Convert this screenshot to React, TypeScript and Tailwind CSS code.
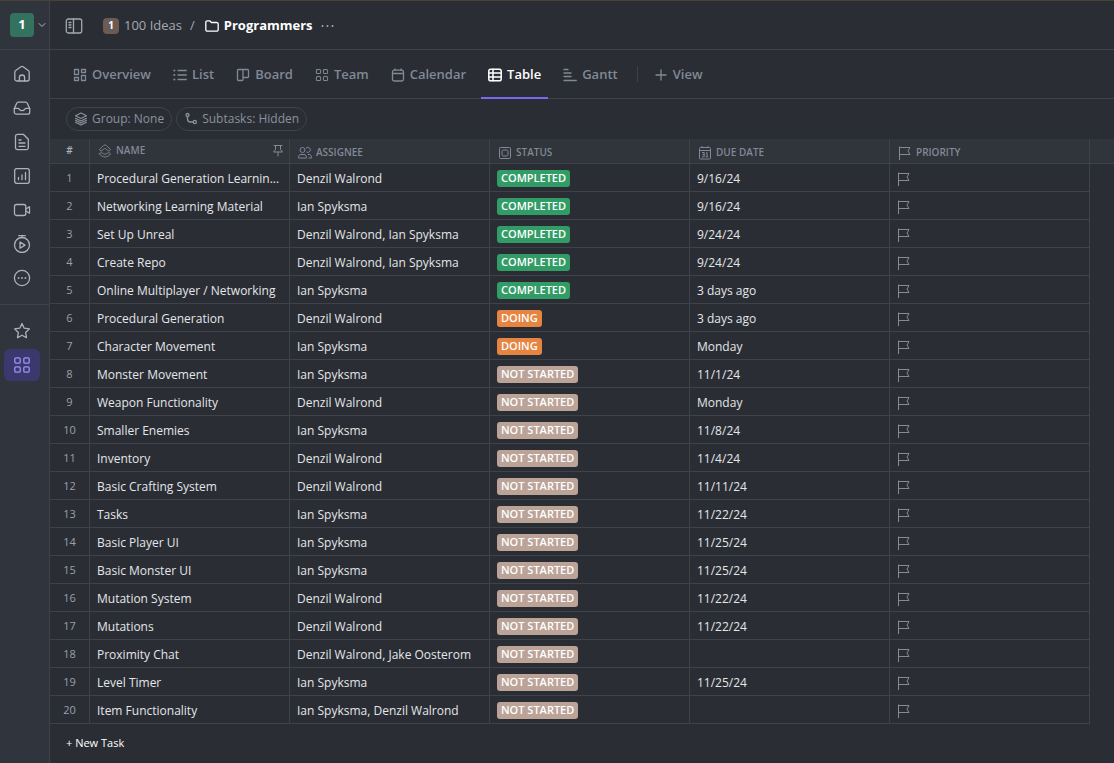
import type { ReactNode } from "react";

type IconProps = { className?: string; children?: ReactNode; box?: number };

function Icon({ className = "size-[18px]", children, box = 18 }: IconProps) {
  return (
    <svg
      aria-hidden="true"
      viewBox={`0 0 ${box} ${box}`}
      className={`shrink-0 ${className}`}
      fill="none"
      stroke="currentColor"
      strokeWidth="1.3"
      strokeLinecap="round"
      strokeLinejoin="round"
    >
      {children}
    </svg>
  );
}

const navItems: { label: string; icon: ReactNode }[] = [
  {
    label: "Home",
    icon: (
      <Icon>
        <path d="M1.8 7.2a2 2 0 0 1 .9-1.7l5.2-3.7a2 2 0 0 1 2.2 0l5.2 3.7a2 2 0 0 1 .9 1.7V14a2 2 0 0 1-2 2H3.8a2 2 0 0 1-2-2z" />
        <path d="M6.4 16v-3.4a2.6 2.6 0 0 1 5.2 0V16" />
      </Icon>
    ),
  },
  {
    label: "Inbox",
    icon: (
      <Icon>
        <path d="M1.3 9.5 3.6 4.4A2 2 0 0 1 5.4 3.2h7.2a2 2 0 0 1 1.8 1.2l2.3 5.1v3.7a2 2 0 0 1-2 2H3.3a2 2 0 0 1-2-2z" />
        <path d="M1.3 9.3h3.5c.9 0 1.2.5 1.6 1.1.5.8 1.3 1.2 2.6 1.2s2.1-.4 2.6-1.2c.4-.6.7-1.1 1.6-1.1h3.5" />
      </Icon>
    ),
  },
  {
    label: "Docs",
    icon: (
      <Icon>
        <path d="M4.5 1.3h5.8l5 5v8.4a2 2 0 0 1-2 2H4.5a2 2 0 0 1-2-2V3.3a2 2 0 0 1 2-2z" />
        <path d="M6 7h2M6 10h6M6 13.3h6" />
      </Icon>
    ),
  },
  {
    label: "Dashboards",
    icon: (
      <Icon>
        <rect x="1.7" y="1.7" width="14.6" height="14.6" rx="2" />
        <path d="M5.5 12.7v-2.2M9 12.7V8M12.5 12.7V5.5" />
      </Icon>
    ),
  },
  {
    label: "Clips",
    icon: (
      <Icon>
        <rect x="1.5" y="3.5" width="11.3" height="11" rx="2" />
        <path d="m12.8 8 3.7-2.2v6.4L12.8 10" />
      </Icon>
    ),
  },
  {
    label: "Timesheets",
    icon: (
      <Icon>
        <circle cx="9" cy="10" r="7.5" />
        <path d="M5.8.7h6.4M9 .7v1.8M7 7v6.2l5-3.1z" />
      </Icon>
    ),
  },
  {
    label: "More",
    icon: (
      <Icon>
        <circle cx="9" cy="9" r="7.6" />
        <path d="M5.6 9h.01M9 9h.01M12.4 9h.01" strokeWidth="1.8" />
      </Icon>
    ),
  },
];

const FourSquares = ({ className = "size-[18px]" }: { className?: string }) => (
  <Icon className={className}>
    <rect x="1.8" y="1.8" width="5.4" height="5.4" rx="1.3" />
    <rect x="10.8" y="1.8" width="5.4" height="5.4" rx="1.3" />
    <rect x="1.8" y="10.8" width="5.4" height="5.4" rx="1.3" />
    <rect x="10.8" y="10.8" width="5.4" height="5.4" rx="1.3" />
  </Icon>
);

const tabs: { label: string; icon: ReactNode }[] = [
  {
    label: "Overview",
    icon: (
      <Icon className="size-3.5" box={14}>
        <path d="M1.5 1.5h4v5h-4zM8.5 1.5h4v3h-4zM1.5 9.5h4v3h-4zM8.5 7.5h4v5h-4z" />
      </Icon>
    ),
  },
  {
    label: "List",
    icon: (
      <Icon className="size-3.5" box={14}>
        <path d="M5 2.5h8.3M5 7h8.3M5 11.5h8.3" />
        <path d="M1.2 2.5h.3M1.2 7h.3M1.2 11.5h.3" strokeWidth="1.8" />
      </Icon>
    ),
  },
  {
    label: "Board",
    icon: (
      <Icon className="size-3.5" box={14}>
        <path d="M2.5 1.5h9a1 1 0 0 1 1 1v6a1 1 0 0 1-1 1H7v2a1 1 0 0 1-1 1H2.5a1 1 0 0 1-1-1v-9a1 1 0 0 1 1-1zM7 1.5v8" />
      </Icon>
    ),
  },
  { label: "Team", icon: <FourSquares className="size-3.5" /> },
  {
    label: "Calendar",
    icon: (
      <Icon className="size-3.5" box={14}>
        <rect x="1.5" y="2.2" width="11" height="10.8" rx="1.8" />
        <path d="M1.5 5.5h11M4 .8v1.4M10 .8v1.4" />
      </Icon>
    ),
  },
  {
    label: "Table",
    icon: (
      <Icon className="size-3.5" box={14}>
        <rect x=".8" y="1.3" width="12.4" height="11.4" rx="1.8" strokeWidth="1.5" />
        <path d="M.8 5.1h12.4M.8 8.9h12.4M5 1.3v11.4" strokeWidth="1.5" />
      </Icon>
    ),
  },
  {
    label: "Gantt",
    icon: (
      <Icon className="size-3.5" box={14}>
        <path d="M1 1.5h4M1 5h7M1 8.5h7M1 12.5h12.3" />
      </Icon>
    ),
  },
];

const Flag = ({ className = "size-3.5" }: { className?: string }) => (
  <svg aria-hidden="true" viewBox="0 0 14 14" className={`shrink-0 ${className}`} fill="none" stroke="currentColor">
    <path d="M1.5.5V14M1.5 1.5h10.500L10 5l2 3.500H1.500" />
  </svg>
);

type Column = { label: string; icon: ReactNode };

const columns: Column[] = [
  {
    label: "Assignee",
    icon: (
      <svg aria-hidden="true" viewBox="0 0 14 14" className="size-3.5 shrink-0" fill="none" stroke="currentColor">
        <circle cx="4.500" cy="4" r="2.5" />
        <path d="M.5 11.500c0-2 1-3 2.500-3h3c1.500 0 2.500 1 2.500 3v.5h-8z" />
        <path d="M8 2.200A2.500 2.500 0 1 1 8.500 6M10 8.500h1c1.500 0 2.500 1 2.500 3v.5h-3" />
      </svg>
    ),
  },
  {
    label: "Status",
    icon: (
      <svg aria-hidden="true" viewBox="0 0 14 14" className="size-3.5 shrink-0" fill="none" stroke="currentColor">
        <rect x="1.5" y="1.5" width="11" height="11" rx="1" />
        <rect x="4" y="4" width="6" height="6" rx="1.5" />
      </svg>
    ),
  },
  {
    label: "Due date",
    icon: (
      <svg aria-hidden="true" viewBox="0 0 14 14" className="size-3.5 shrink-0" fill="none" stroke="currentColor">
        <rect x="1.5" y="1.5" width="11" height="11.5" rx="1" />
        <path d="M1.5 4.500h11M4 0v1.500M10 0v1.500" />
        <path d="M4 6.500h2.200v4.300H4M4.500 8.600h1.700M9 10.800V6.500L8 7M7.800 10.800h2.400" />
      </svg>
    ),
  },
  { label: "Priority", icon: <Flag /> },
];

type Status = "COMPLETED" | "DOING" | "NOT STARTED";
type Task = { name: string; assignee: string; status: Status; due: string };

const statusColor: Record<Status, string> = {
  COMPLETED: "bg-[#329c66]",
  DOING: "bg-[#e68542]",
  "NOT STARTED": "bg-[#bba398]",
};

const D = "Denzil Walrond";
const I = "Ian Spyksma";

const tasks: Task[] = [
  { name: "Procedural Generation Learnin...", assignee: D, status: "COMPLETED", due: "9/16/24" },
  { name: "Networking Learning Material", assignee: I, status: "COMPLETED", due: "9/16/24" },
  { name: "Set Up Unreal", assignee: `${D}, ${I}`, status: "COMPLETED", due: "9/24/24" },
  { name: "Create Repo", assignee: `${D}, ${I}`, status: "COMPLETED", due: "9/24/24" },
  { name: "Online Multiplayer / Networking", assignee: I, status: "COMPLETED", due: "3 days ago" },
  { name: "Procedural Generation", assignee: D, status: "DOING", due: "3 days ago" },
  { name: "Character Movement", assignee: I, status: "DOING", due: "Monday" },
  { name: "Monster Movement", assignee: I, status: "NOT STARTED", due: "11/1/24" },
  { name: "Weapon Functionality", assignee: D, status: "NOT STARTED", due: "Monday" },
  { name: "Smaller Enemies", assignee: I, status: "NOT STARTED", due: "11/8/24" },
  { name: "Inventory", assignee: D, status: "NOT STARTED", due: "11/4/24" },
  { name: "Basic Crafting System", assignee: D, status: "NOT STARTED", due: "11/11/24" },
  { name: "Tasks", assignee: I, status: "NOT STARTED", due: "11/22/24" },
  { name: "Basic Player UI", assignee: I, status: "NOT STARTED", due: "11/25/24" },
  { name: "Basic Monster UI", assignee: I, status: "NOT STARTED", due: "11/25/24" },
  { name: "Mutation System", assignee: D, status: "NOT STARTED", due: "11/22/24" },
  { name: "Mutations", assignee: D, status: "NOT STARTED", due: "11/22/24" },
  { name: "Proximity Chat", assignee: `${D}, Jake Oosterom`, status: "NOT STARTED", due: "" },
  { name: "Level Timer", assignee: I, status: "NOT STARTED", due: "11/25/24" },
  { name: "Item Functionality", assignee: `${I}, ${D}`, status: "NOT STARTED", due: "" },
];

function Sidebar() {
  return (
    <aside className="flex w-[50px] shrink-0 flex-col border-r border-[#3e424a] bg-[#30343c] text-[#adb3bd]">
      <button aria-label="Switch workspace" className="flex h-[49px] items-center gap-1 border-b border-[#3e424a] pl-2.5">
        <span className="flex size-6 items-center justify-center rounded bg-[#33725f] text-[13px] font-bold text-white">1</span>
        <Icon className="size-2" box={8}>
          <path d="m1 2.500 3 3 3-3" strokeWidth="1" />
        </Icon>
      </button>
      <nav className="flex flex-col border-b border-[#3e424a] pt-[7px] pb-[9px] pl-1">
        {navItems.map((item) => (
          <a key={item.label} href="#" aria-label={item.label} className="flex h-[34px] w-9 items-center justify-center">
            {item.icon}
          </a>
        ))}
      </nav>
      <div className="flex flex-col gap-0.5 pt-2.5 pl-1">
        <a href="#" aria-label="Favorites" className="flex h-8 w-9 items-center justify-center">
          <Icon>
            <path d="m9 1.500 2.200 4.700 5.200.7-3.800 3.600.9 5.200L9 13.200l-4.500 2.500.9-5.200L1.600 6.900l5.200-.7z" />
          </Icon>
        </a>
        <a href="#" aria-label="Spaces" aria-current="page" className="flex h-8 w-9 items-center justify-center rounded-md bg-[#3c386e] text-[#9d92fb]">
          <FourSquares />
        </a>
      </div>
    </aside>
  );
}

function Header() {
  return (
    <header className="flex h-[49px] items-center border-b border-[#3e424a] pt-px pl-[15px] text-[13px] text-[#a3a9b3]">
      <button aria-label="Toggle sidebar" className="mr-5">
        <Icon>
          <rect x="1.3" y="2" width="15.4" height="14" rx="2" />
          <path d="M8.500 2v14M4 5.500h2M4 8h2M4 10.500h2" />
        </Icon>
      </button>
      <a href="#" className="flex items-center gap-[5px]">
        <span className="flex size-4 items-center justify-center rounded-sm bg-[#6b5b54] text-[10px] font-bold text-white">1</span>
        100 Ideas
      </a>
      <span className="mr-2.5 ml-2">/</span>
      <a href="#" className="flex items-center gap-[5px] font-bold text-white">
        <Icon className="size-3.5" box={14}>
          <path d="M.8 3.300a1.500 1.500 0 0 1 1.500-1.500h2.400l1.700 1.700h5.300a1.500 1.500 0 0 1 1.500 1.500v5.700a1.500 1.500 0 0 1-1.500 1.500H2.300a1.500 1.500 0 0 1-1.500-1.500z" />
        </Icon>
        Programmers
      </a>
      <button aria-label="More options" className="ml-2">
        <Icon className="size-3.5" box={14}>
          <path d="M1.500 7h.010M6.500 7h.010M11.500 7h.010" strokeWidth="2" />
        </Icon>
      </button>
    </header>
  );
}

function ViewTabs() {
  return (
    <div className="flex h-[49px] border-b border-[#3e424a] pl-4 text-[13px] font-semibold text-[#808996]">
      <nav className="flex gap-2">
        {tabs.map((tab) => {
          const active = tab.label === "Table";
          return (
            <a
              key={tab.label}
              href="#"
              aria-current={active ? "page" : undefined}
              className={`-mb-px flex items-center gap-[5px] border-b-2 px-[7px] pt-0.5 ${
                active ? "border-[#7b68ee] text-white" : "border-transparent"
              }`}
            >
              {tab.icon}
              {tab.label}
            </a>
          );
        })}
      </nav>
      <div className="mr-4 ml-3 h-4 w-px self-center bg-[#3e424a]" />
      <button className="flex items-center gap-[5px] pt-px">
        <Icon className="size-3.5" box={14}>
          <path d="M7 2v10M2 7h10" />
        </Icon>
        View
      </button>
    </div>
  );
}

function Filters() {
  return (
    <div className="flex h-10 items-center gap-1 pl-4 text-xs font-medium text-[#8a929e]">
      <button className="flex h-6 items-center gap-1 rounded-full border border-[#3e424a] px-[7px]">
        <Icon className="size-3.5" box={14}>
          <path d="m7 1 5.500 2.800L7 6.600 1.500 3.800zM1.500 6.300 7 9.100l5.500-2.800M1.500 8.300 7 11.100l5.500-2.800M1.500 10.300 7 13.100l5.500-2.800" strokeWidth="1.1" />
        </Icon>
        Group: None
      </button>
      <button className="flex h-6 items-center gap-1 rounded-full border border-[#3e424a] px-[7px]">
        <Icon className="size-3.5" box={14}>
          <circle cx="3.5" cy="3" r="1.5" />
          <circle cx="10.8" cy="10" r="1.6" />
          <path d="M3.5 4.500v2.500a3 3 0 0 0 3 3h2.700" />
        </Icon>
        Subtasks: Hidden
      </button>
    </div>
  );
}

function TaskTable() {
  const th = "border-b border-[#3e424a] bg-[#30343b] p-0 font-semibold";
  const td = "h-7 border-r border-b border-[#3e424a] pt-0.5 pb-0";
  return (
    <table className="w-full table-fixed border-separate border-spacing-0 text-left text-xs text-[#e4e6e9]">
      <colgroup>
        <col className="w-10" />
        <col className="w-[200px]" />
        <col className="w-[200px]" />
        <col className="w-[200px]" />
        <col className="w-[200px]" />
        <col className="w-[200px]" />
        <col />
      </colgroup>
      <thead className="text-[10px] text-[#808996] uppercase">
        <tr>
          <th className={`${th} h-[25px] border-r text-center text-[#adb3bd]`}>#</th>
          <th className={`${th} border-r`}>
            <div className="flex items-center gap-1 pr-1 pl-2">
              <Icon className="size-3.5" box={14}>
                <path
                  d="M2.600 6.800 1.500 5.400 5.600 1.500a2 2 0 0 1 2.800 0l4.100 3.900-1.100 1.400a.8.800 0 0 1-1.100.1L7.600 4.600a.9.900 0 0 0-1.200 0L3.700 6.900a.8.800 0 0 1-1.100-.1z"
                  strokeWidth=".9"
                />
                <path
                  d="M1.500 9.800 2.900 8.700a.8.800 0 0 1 1 .1c1.800 1.800 4.400 1.800 6.200 0a.8.800 0 0 1 1-.1l1.400 1.100c-2.900 4.300-8.100 4.300-11 0z"
                  strokeWidth=".9"
                />
              </Icon>
              Name
              <Icon className="ml-auto size-3.5" box={14}>
                <path d="M3 1.500h8M4.500 1.500v4L2.500 8h9l-2-2.500v-4M7 8v4" strokeWidth="1" />
              </Icon>
            </div>
          </th>
          {columns.map((c) => (
            <th key={c.label} className={`${th} border-r`}>
              <div className="flex items-center gap-1 pt-1 pl-2">
                {c.icon}
                {c.label}
              </div>
            </th>
          ))}
          <td className={th} />
        </tr>
      </thead>
      <tbody>
        {tasks.map((t, i) => (
          <tr key={t.name}>
            <td className={`${td} text-center text-[11px] text-[#9ba0a8]`}>{i + 1}</td>
            <td className={`${td} truncate px-[7px]`}>{t.name}</td>
            <td className={`${td} truncate px-[7px]`}>{t.assignee}</td>
            <td className={`${td} px-[7px]`}>
              <span className={`flex h-[17px] w-fit items-center rounded-[3px] px-1 text-[11px] font-semibold text-white ${statusColor[t.status]}`}>
                {t.status}
              </span>
            </td>
            <td className={`${td} px-[7px]`}>{t.due}</td>
            <td className={`${td} px-[7px] text-[#8b8b8b]`} aria-label="No priority">
              <Flag />
            </td>
          </tr>
        ))}
      </tbody>
    </table>
  );
}

export default function App() {
  return (
    <div className="flex min-h-screen border-t border-[#4a4230] bg-[#2a2d34] font-['Open_Sans','Noto_Sans',sans-serif]">
      <Sidebar />
      <main className="min-w-0 flex-1">
        <Header />
        <ViewTabs />
        <Filters />
        <TaskTable />
        <button className="mt-2.5 ml-4 flex h-[18px] items-center text-[11px] text-white">+ New Task</button>
      </main>
    </div>
  );
}
